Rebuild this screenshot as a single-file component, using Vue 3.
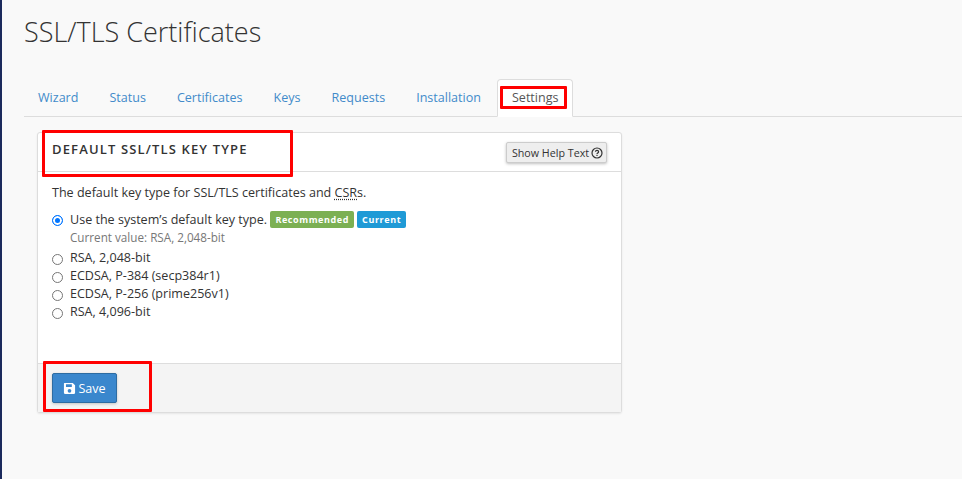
<script setup>
const tabs = ['Wizard', 'Status', 'Certificates', 'Keys', 'Requests', 'Installation', 'Settings']
const options = ['RSA, 2,048-bit', 'ECDSA, P-384 (secp384r1)', 'ECDSA, P-256 (prime256v1)', 'RSA, 4,096-bit']
</script>

<template>
  <div class="page">
    <main class="main">
      <h1 class="title">SSL/TLS Certificates</h1>
      <nav class="tabs">
        <a v-for="t in tabs" :key="t" class="tab" :class="{ active: t === 'Settings' }">
          <span class="tab-label">{{ t }}</span>
        </a>
      </nav>
      <section class="panel">
        <header class="panel-head">
          <h2 class="panel-title">DEFAULT SSL/TLS KEY TYPE</h2>
          <button class="help">Show Help Text
            <svg class="help-icon" viewBox="0 0 12 12" width="12" height="12">
              <circle cx="6" cy="6" r="5" fill="none" stroke="#333" stroke-width="1.2" />
              <path d="M4.4 4.7C4.5 3.8 5.1 3.3 6 3.3c.9 0 1.6.6 1.6 1.4 0 1.2-1.6 1.2-1.6 2.3" fill="none" stroke="#333" stroke-width="1.2" />
              <rect x="5.4" y="7.8" width="1.2" height="1.2" fill="#333" />
            </svg>
          </button>
        </header>
        <div class="panel-body">
          <p class="intro">The default key type for SSL/TLS certificates and <abbr class="abbr">CSR</abbr>s.</p>
          <div class="option first">
            <span class="radio checked"></span>
            <div>
              <div class="opt-line">Use the system’s default key type.
                <span class="badge green">Recommended</span>
                <span class="badge blue">Current</span>
              </div>
              <div class="hint">Current value: RSA, 2,048-bit</div>
            </div>
          </div>
          <div v-for="o in options" :key="o" class="option">
            <span class="radio"></span>
            <div class="opt-line">{{ o }}</div>
          </div>
        </div>
        <footer class="panel-foot">
          <button class="save">
            <svg viewBox="0 0 14 14" width="13" height="13">
              <path fill-rule="evenodd" fill="#fff" d="M1.5 1H10.5L13 3.5V11.500A1.500 1.500 0 0 1 11.500 13H2.500A1.500 1.500 0 0 1 1 11.500V1.500ZM3.200 2.500V5.500H9.500V2.500ZM7 7.500A2 2 0 1 0 7 11.500A2 2 0 1 0 7 7.500Z" />
            </svg>
            Save
          </button>
        </footer>
      </section>
      <div class="mark mark-settings"></div>
      <div class="mark mark-head"></div>
      <div class="mark mark-save"></div>
    </main>
  </div>
</template>

<style>
html, body { margin: 0; background: #f9f9f9; }
</style>

<style scoped>
.page {
  height: 479px;
  overflow: hidden;
  border-left: 2px solid #1b2a5c;
  background: #f9f9f9;
  font-family: "Open Sans", sans-serif;
  color: #333;
  box-sizing: border-box;
}
.main { position: relative; padding: 0 0 0 22px; }
.title {
  margin: 0;
  padding-top: 14px;
  height: 79px;
  box-sizing: border-box;
  font-size: 27px;
  line-height: 36px;
  font-weight: 300;
  color: #333;
}
.tabs {
  display: flex;
  height: 38px;
  box-sizing: border-box;
  border-bottom: 1px solid #ddd;
}
.tab {
  height: 38px;
  box-sizing: border-box;
  padding: 10px 14px 0;
  margin-right: 3px;
  font-size: 12.55px;
  line-height: 18px;
  color: #428bca;
}
.tab.active {
  margin-left: -1px;
  margin-right: 0;
  color: #555;
  background: #fff;
  border: 1px solid #ddd;
  border-bottom-color: #fff;
  border-radius: 4px 4px 0 0;
  padding-top: 9px;
}
.panel {
  margin: 15px 0 0 13px;
  width: 585px;
  height: 281px;
  box-sizing: border-box;
  display: flex;
  flex-direction: column;
  background: #fff;
  border: 1px solid #ddd;
  border-radius: 3px;
  box-shadow: 0 1px 2px rgba(0, 0, 0, 0.08);
}
.panel-head {
  height: 39px;
  flex: none;
  box-sizing: border-box;
  border-bottom: 1px solid #ddd;
  display: flex;
  justify-content: space-between;
  padding: 0 14px;
}
.panel-title {
  margin: 7px 0 0;
  font-size: 13px;
  line-height: 19px;
  font-weight: 600;
  letter-spacing: 1.15px;
  color: #333;
}
.help {
  margin-top: 9px;
  height: 21px;
  width: 101px;
  padding: 0 0 0 2px;
  display: flex;
  align-items: center;
  justify-content: center;
  gap: 2px;
  font: 400 10.7px "Open Sans", sans-serif;
  color: #333;
  background: #eee;
  border: 1px solid #ccc;
  border-radius: 2px;
  box-shadow: 0 1px 3px rgba(0, 0, 0, 0.25);
}
.panel-body { flex: 1; padding: 12px 14px 0; font-size: 12.55px; line-height: 18px; }
.intro { margin: 0 0 9px; }
.abbr { text-decoration: underline dotted #333; text-underline-offset: 2px; }
.option { display: flex; gap: 7px; height: 18px; }
.option.first { height: auto; margin-bottom: 3px; }
.radio {
  flex: none;
  width: 11px;
  height: 11px;
  margin-top: 5px;
  box-sizing: border-box;
  border: 1px solid #767676;
  border-radius: 50%;
  background: #fff;
}
.radio.checked {
  margin-top: 4px;
  border: 1px solid #0075ff;
  background: #0075ff;
  box-shadow: inset 0 0 0 2px #fff;
}
.opt-line { color: #333; white-space: nowrap; height: 18px; }
.hint { color: #777; font-size: 11.7px; line-height: 18px; margin-top: -1px; }
.badge {
  display: inline-block;
  height: 17px;
  line-height: 17px;
  padding: 0 5px;
  border-radius: 2px;
  color: #fff;
  font-size: 9px;
  font-weight: 700;
  letter-spacing: 0.6px;
  vertical-align: top;
}
.badge.green { background: #7cb053; }
.badge.blue { background: #1f9ad6; margin-left: 3px; }
.panel-foot {
  height: 49px;
  flex: none;
  box-sizing: border-box;
  padding: 9px 14px;
  background: #f4f4f4;
  border-top: 1px solid #ddd;
}
.save {
  width: 65px;
  height: 30px;
  padding: 0;
  display: flex;
  align-items: center;
  justify-content: center;
  gap: 2px;
  font: 400 12.55px "Open Sans", sans-serif;
  color: #fff;
  background: #3a87cd;
  border: 1px solid #2d6ca2;
  border-radius: 2px;
  box-shadow: 0 1px 3px rgba(0, 0, 0, 0.2);
}
.mark { position: absolute; box-sizing: border-box; border: 3px solid #f00; border-radius: 1px; pointer-events: none; }
.mark-settings { left: 498px; top: 86px; width: 67px; height: 23px; }
.mark-head { left: 40px; top: 130px; width: 251px; height: 47px; }
.mark-save { left: 41px; top: 361px; width: 109px; height: 51px; }
</style>
